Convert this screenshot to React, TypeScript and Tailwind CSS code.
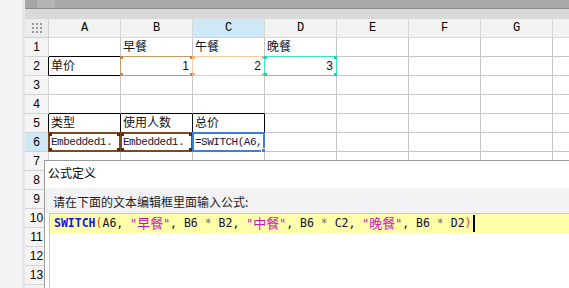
import type { ReactNode } from 'react';

const cols = ['A', 'B', 'C', 'D', 'E', 'F', 'G', ''];

type Cell = { text?: string; right?: boolean; mono?: boolean; box?: 'tan' | 'peach' | 'teal' | 'brown' | 'blue' };

const cells: Record<string, Cell> = {
  B1: { text: '早餐' },
  C1: { text: '午餐' },
  D1: { text: '晚餐' },
  A2: { text: '单价' },
  B2: { text: '1', right: true, box: 'tan' },
  C2: { text: '2', right: true, box: 'peach' },
  D2: { text: '3', right: true, box: 'teal' },
  A5: { text: '类型' },
  B5: { text: '使用人数' },
  C5: { text: '总价' },
  A6: { text: 'Embedded1.', mono: true, box: 'brown' },
  B6: { text: 'Embedded1.', mono: true, box: 'brown' },
  C6: { text: '=SWITCH(A6,', mono: true, box: 'blue' },
};

// cells with the black table border
const blackBottom = new Set(['A1', 'B1', 'C1', 'D1', 'A2', 'B2', 'C2', 'D2', 'A4', 'B4', 'C4', 'A5', 'B5', 'C5', 'A6', 'B6', 'C6']);
const blackRight = new Set(['A2', 'B2', 'C2', 'D2', 'A5', 'B5', 'C5', 'A6', 'B6', 'C6']);

const Corners = ({ color }: { color: string }) => (
  <>
    <span className={`absolute -left-px -top-px w-[3px] h-[3px] ${color}`} />
    <span className={`absolute -right-px -top-px w-[3px] h-[3px] ${color}`} />
    <span className={`absolute -left-px -bottom-px w-[3px] h-[3px] ${color}`} />
    <span className={`absolute -right-px -bottom-px w-[3px] h-[3px] ${color}`} />
  </>
);

const Box = ({ kind }: { kind: Cell['box'] }) => {
  if (kind === 'tan')
    return (
      <div className="absolute -left-px -top-px -right-px -bottom-px border border-[#c99a68]">
        <Corners color="bg-[#b5845a]" />
      </div>
    );
  if (kind === 'peach')
    return (
      <div className="absolute -left-px -top-px -right-px -bottom-px border border-[#f7c9a0]">
        <Corners color="bg-[#f0b27e]" />
      </div>
    );
  if (kind === 'teal')
    return (
      <div className="absolute -left-px -top-px -right-px -bottom-px border border-[#3fe0bd]">
        <Corners color="bg-[#22d0a8]" />
      </div>
    );
  if (kind === 'brown')
    return (
      <div className="absolute -left-px -top-px -right-px -bottom-px border-2 border-[#7b4a23]">
        <Corners color="bg-[#4f2c10]" />
      </div>
    );
  if (kind === 'blue')
    return (
      <div className="absolute -left-px -top-px -right-px -bottom-px border-2 border-[#3b7fdc]">
        <span className="absolute -right-[4px] -bottom-[4px] w-[6px] h-[6px] bg-[#3b7fdc] border border-white" />
      </div>
    );
  return null;
};

const GridDots = () => (
  <div className="grid grid-cols-3 gap-[2px]">
    {Array.from({ length: 9 }).map((_, i) => (
      <span key={i} className="w-[2px] h-[2px] bg-[#9a9a9a]" />
    ))}
  </div>
);

const Token = ({ c, children }: { c: string; children: ReactNode }) => <span className={c}>{children}</span>;

const Str = ({ zh }: { zh: string }) => (
  <span className="text-[#d010c0]">
    "<span className="text-[13px]">{zh}</span>"
  </span>
);

export default function App() {
  const rows = Array.from({ length: 14 }, (_, i) => i + 1);

  return (
    <div className="relative w-[569px] h-[288px] overflow-hidden bg-[#f3f3f6] flex font-['Liberation_Sans','Noto_Sans_CJK_SC',sans-serif] text-[12px] text-black">
      <div className="w-[22px] shrink-0" />
      <div className="w-[3px] shrink-0 bg-[#e7e7ea]" />
      <div className="flex-1 flex flex-col min-w-0">
        {/* top bars */}
        <div className="flex h-[9px] shrink-0 border-b border-[#8c8c8c]">
          <div className="w-[12px] bg-[#a6a6a6]" />
          <div className="w-[18px] bg-[#b4b4b4]" />
          <div className="flex-1 bg-[#a9a9a9]" />
        </div>
        <div className="h-[10px] shrink-0 bg-[#d9d9d9]" />

        {/* column headers */}
        <div className="grid grid-cols-[24px_repeat(8,72px)] h-[19px] shrink-0">
          <div className="flex items-center justify-center bg-[#ececec] border-r border-b border-[#d2d2d2]">
            <GridDots />
          </div>
          {cols.map((c, i) => (
            <div
              key={i}
              className={`flex items-center justify-center border-r border-b border-[#d6d6d6] font-['Liberation_Mono',monospace] text-[12px] ${
                c === 'C' ? 'bg-[#cde8f7]' : 'bg-[#f2f2f2]'
              }`}
            >
              {c}
            </div>
          ))}
        </div>

        {/* rows */}
        {rows.map((r) => (
          <div key={r} className="grid grid-cols-[24px_repeat(8,72px)] h-[19px] shrink-0">
            <div
              className={`flex items-center justify-center border-r border-b border-[#d4d4d4] text-[12px] ${
                r === 6 ? 'bg-[#cde8f7]' : 'bg-[#f4f4f4]'
              } ${r === 2 || r === 5 || r === 6 ? 'border-r-black' : ''}`}
            >
              {r < 14 ? r : ''}
            </div>
            {cols.map((c, i) => {
              const key = `${c}${r}`;
              const cell = cells[key];
              return (
                <div
                  key={i}
                  className={`relative bg-white border-r border-b border-[#c6c6c6] flex items-center px-[2px] ${
                    blackBottom.has(key) ? 'border-b-black' : ''
                  } ${blackRight.has(key) ? 'border-r-black' : ''} ${cell?.right ? 'justify-end pr-[3px]' : ''}`}
                >
                  {cell?.text && (
                    <span
                      className={
                        cell.mono
                          ? "font-['Liberation_Mono',monospace] text-[11px] tracking-[-0.5px] text-[#1c1430] whitespace-nowrap overflow-hidden"
                          : 'text-[12px] text-[#111] whitespace-nowrap'
                      }
                    >
                      {cell.text}
                    </span>
                  )}
                  {cell?.box && <Box kind={cell.box} />}
                </div>
              );
            })}
          </div>
        ))}
      </div>

      {/* formula dialog */}
      <div className="absolute left-[44px] top-[160px] right-0 bottom-0 border-l border-t border-[#9c9c9c] bg-white flex flex-col">
        <div className="h-[27px] shrink-0 bg-white pl-[3px] pt-[4px] text-[12px] font-['Noto_Sans_CJK_SC',sans-serif] leading-[16px]">
          公式定义
        </div>
        <div className="h-[25px] shrink-0 bg-[#f2f2f5] pl-[8px] pt-[6px] text-[12px] font-['Noto_Sans_CJK_SC',sans-serif] leading-[16px] text-[#222]">
          请在下面的文本编辑框里面输入公式:
        </div>
        <div className="flex-1 ml-[4px] border-t border-l border-[#c8c8c8] bg-white">
          <div className="h-[19px] bg-[#ffffaa] flex items-center pl-[4px] font-['DejaVu_Sans_Mono','Noto_Sans_CJK_SC',monospace] text-[11.5px] whitespace-pre text-[#10102a]">
            <Token c="text-[#1010ff] font-bold">SWITCH</Token>
            <Token c="text-[#ff3a1a]">(</Token>
            <Token c="">A6, </Token>
            <Str zh="早餐" />
            <Token c="">, B6 </Token>
            <Token c="text-[#8a7060]">*</Token>
            <Token c=""> B2, </Token>
            <Str zh="中餐" />
            <Token c="">, B6 </Token>
            <Token c="text-[#8a7060]">*</Token>
            <Token c=""> C2, </Token>
            <Str zh="晚餐" />
            <Token c="">, B6 </Token>
            <Token c="text-[#8a7060]">*</Token>
            <Token c=""> D2</Token>
            <Token c="text-[#ff3a1a]">)</Token>
            <span className="ml-[1px] w-[2px] h-[17px] bg-black" />
          </div>
        </div>
      </div>
    </div>
  );
}
